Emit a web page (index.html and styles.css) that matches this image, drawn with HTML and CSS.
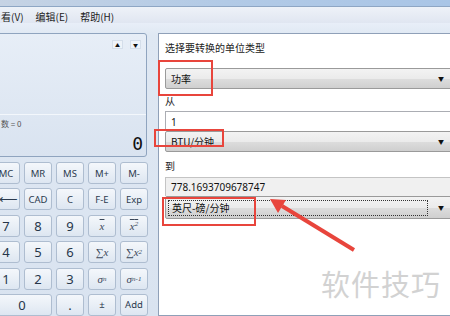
FILE: index.html
```html
<!DOCTYPE html>
<html lang="zh-CN">
<head>
    <meta charset="UTF-8">
    <title>计算器 - 单位转换</title>
    <link rel="stylesheet" href="styles.css">
</head>
<body>
    <div class="window">
        <div class="titlebar"></div>

        <!-- Menu bar -->
        <div class="menubar">
            <span class="menu first">看(V)</span>
            <span class="menu">编辑(E)</span>
            <span class="menu">帮助(H)</span>
        </div>

        <div class="client">
            <!-- Calculator side -->
            <div class="calc">
                <div class="display">
                    <div class="display-top">
                        <span class="scroll-btn">&#9650;</span>
                        <span class="scroll-btn">&#9660;</span>
                    </div>
                    <div class="display-bottom">
                        <div class="paren">数 = 0</div>
                        <div class="value">0</div>
                    </div>
                </div>

                <div class="keys">
                    <button class="key">MC</button>
                    <button class="key">MR</button>
                    <button class="key">MS</button>
                    <button class="key">M+</button>
                    <button class="key">M-</button>

                    <button class="key back">&#10229;</button>
                    <button class="key">CAD</button>
                    <button class="key">C</button>
                    <button class="key">F-E</button>
                    <button class="key">Exp</button>

                    <button class="key num">7</button>
                    <button class="key num">8</button>
                    <button class="key num">9</button>
                    <button class="key math"><span class="bar">x</span></button>
                    <button class="key math"><span class="bar">x<sup>2</sup></span></button>

                    <button class="key num">4</button>
                    <button class="key num">5</button>
                    <button class="key num">6</button>
                    <button class="key math">&sum;x</button>
                    <button class="key math">&sum;x<sup>2</sup></button>

                    <button class="key num">1</button>
                    <button class="key num">2</button>
                    <button class="key num">3</button>
                    <button class="key math">&sigma;<sub>n</sub></button>
                    <button class="key math">&sigma;<sub>n-1</sub></button>

                    <button class="key num wide">0</button>
                    <button class="key num">.</button>
                    <button class="key">&plusmn;</button>
                    <button class="key">Add</button>
                </div>
            </div>

            <!-- Unit conversion side -->
            <div class="converter">
                <div class="label first-label">选择要转换的单位类型</div>
                <div class="combo"><span>功率</span><span class="arrow">&#9660;</span></div>

                <div class="label from-label">从</div>
                <div class="field">1</div>
                <div class="combo"><span>BTU/分钟</span><span class="arrow">&#9660;</span></div>

                <div class="label to-label">到</div>
                <div class="field result">778.1693709678747</div>
                <div class="combo focused"><span class="focus-box">英尺-磅/分钟</span><span class="arrow">&#9660;</span></div>
            </div>
        </div>

        <!-- Annotation marks over the screenshot -->
        <svg class="marks" width="450" height="316" viewBox="0 0 450 316">
            <rect x="159" y="61" width="53" height="34" fill="none" stroke="#e8453c" stroke-width="2"/>
            <rect x="155" y="130" width="68" height="16" fill="none" stroke="#e8453c" stroke-width="2"/>
            <rect x="163" y="198" width="92" height="27" fill="none" stroke="#e8453c" stroke-width="2"/>
            <line x1="354" y1="250" x2="282" y2="206" stroke="#e8453c" stroke-width="4"/>
            <polygon points="270,199 286,200 278,213" fill="#e8453c"/>
        </svg>

        <div class="watermark">软件技巧</div>
    </div>
</body>
</html>
```

FILE: styles.css
```css
/* Page frame */
* {
    box-sizing: border-box;
}

body {
    margin: 0;
    width: 450px;
    height: 316px;
    overflow: hidden;
    font-family: "Noto Sans", "Noto Sans CJK SC", sans-serif;
    font-size: 10px;
    color: #1e1e1e;
    background: #dce6f2;
}

.window {
    position: relative;
    height: 316px;
}

.titlebar {
    height: 7px;
    background: linear-gradient(90deg, #c6d3e4, #b2cae6 50%, #a9c5e6);
    border-bottom: 1px solid #8ea6c4;
}

/* Menu bar */
.menubar {
    height: 16px;
    display: flex;
    align-items: center;
    gap: 12px;
    padding-top: 2px;
    background: linear-gradient(#eef2f8, #e0e6f1);
    font-family: "Noto Sans CJK SC", sans-serif;
    font-size: 10px;
    color: #222;
}

.menu.first {
    margin-left: 1px;
}

/* Client area */
.client {
    display: flex;
    gap: 10px;
    padding-top: 10px;
    height: 293px;
    background: linear-gradient(#e8eef8 0, #dfe8f3 12px, #d9e3f0 100%);
}

/* Calculator column */
.calc {
    width: 158px;
    margin-left: -10px;
    flex-shrink: 0;
}

.display {
    width: 157px;
    height: 124px;
    border: 1px solid #8fa4bf;
    border-radius: 3px;
    background: linear-gradient(#e7eef7, #d9e3f0);
    display: flex;
    flex-direction: column;
}

.display-top {
    height: 81px;
    display: flex;
    justify-content: flex-end;
    gap: 7px;
    padding: 6px 5px 0 0;
    border-bottom: 1px solid #f3f7fc;
}

.scroll-btn {
    width: 11px;
    height: 9px;
    display: flex;
    align-items: center;
    justify-content: center;
    font-size: 5px;
    color: #111;
    background: #eef3f9;
    border: 1px solid #d4deea;
}

.display-bottom {
    flex: 1;
    display: flex;
    flex-direction: column;
    padding: 4px 3px 0 10px;
}

.paren {
    font-family: "Noto Sans CJK SC", sans-serif;
    font-size: 8px;
    color: #555;
    line-height: 10px;
}

.value {
    text-align: right;
    font-family: "DejaVu Sans Mono", monospace;
    font-size: 18px;
    line-height: 18px;
    margin-top: 6px;
    color: #111;
}

/* Key pad */
.keys {
    display: grid;
    grid-template-columns: repeat(5, 28px);
    grid-auto-rows: 22px;
    column-gap: 4px;
    row-gap: 4.4px;
    margin-top: 5px;
    padding-left: 2px;
}

.key {
    display: flex;
    align-items: center;
    justify-content: center;
    padding: 0;
    font-family: "Noto Sans", sans-serif;
    font-size: 9.5px;
    color: #2b3a4e;
    border: 1px solid #aebdd0;
    border-radius: 3px;
    background: linear-gradient(#f4f7fb, #e9eff6 50%, #dde6f1);
}

.key.num {
    font-size: 13px;
    color: #26364a;
}

.key.back {
    font-size: 13px;
    justify-content: flex-start;
    padding-left: 6px;
}

.key.wide {
    grid-column: span 2;
}

.key.math {
    font-family: "Liberation Serif", serif;
    font-style: italic;
    font-size: 11px;
    color: #3a475a;
}

.key sup {
    font-size: 7px;
    vertical-align: 4px;
    line-height: 0;
}

.key sub {
    font-size: 7px;
    vertical-align: -2px;
    line-height: 0;
}

.bar {
    text-decoration: overline;
}

/* Unit converter panel */
.converter {
    flex: 1;
    min-width: 0;
    height: 283px;
    background: #fff;
    border: 1px solid #8fa0b8;
    border-right: none;
    padding: 0 0 0 6px;
    font-family: "Noto Sans CJK SC", sans-serif;
    font-size: 10px;
}

.label {
    line-height: 14px;
    color: #222;
}

.first-label {
    margin-top: 7px;
}

.from-label {
    margin-top: 5px;
}

.to-label {
    margin-top: 7px;
}

.combo {
    width: 288px;
    height: 21px;
    display: flex;
    align-items: center;
    justify-content: space-between;
    padding: 0 8px 0 5px;
    border: 1px solid #9a9a9a;
    border-radius: 2px;
    background: linear-gradient(#f3f3f3, #ebebeb 50%, #dddddd 51%, #cfcfcf);
    color: #111;
}

.converter .first-label + .combo {
    margin-top: 13px;
}

.arrow {
    font-size: 6px;
    color: #111;
}

.field {
    width: 288px;
    height: 20px;
    margin-top: 3px;
    display: flex;
    align-items: center;
    padding-left: 5px;
    border: 1px solid #abadb3;
    border-bottom: none;
    font-family: "Noto Sans", sans-serif;
    font-size: 10px;
    color: #111;
    background: #fff;
}

.field.result {
    height: 19px;
    margin-top: 4px;
    background: #f0f0f0;
    border-color: #c4c4c4;
}

.combo.focused {
    height: 23px;
    padding-left: 2px;
}

.focus-box {
    flex: 1;
    height: 16px;
    margin-right: 10px;
    padding-left: 3px;
    display: flex;
    align-items: center;
    border: 1px dotted #333;
}

/* Annotation overlay */
.marks {
    position: absolute;
    top: 0;
    left: 0;
}

.watermark {
    position: absolute;
    left: 321px;
    top: 262px;
    font-family: "Noto Sans CJK SC", sans-serif;
    font-size: 29px;
    letter-spacing: 1px;
    color: #d2d2d2;
}
```
